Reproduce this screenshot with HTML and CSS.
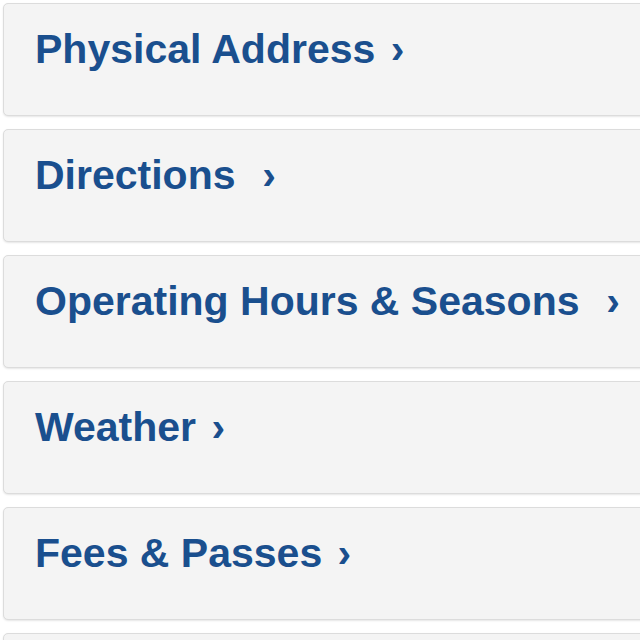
FILE: index.html
```html
<!DOCTYPE html>
<html>
<head>
<meta charset="utf-8">
<link rel="stylesheet" href="styles.css">
</head>
<body>
<div class="list">
  <div class="card"><a class="link">Physical Address <span class="chev">›</span></a></div>
  <div class="card"><a class="link">Directions &nbsp;<span class="chev">›</span></a></div>
  <div class="card"><a class="link">Operating Hours &amp; Seasons &nbsp;<span class="chev">›</span></a></div>
  <div class="card"><a class="link">Weather <span class="chev">›</span></a></div>
  <div class="card"><a class="link">Fees &amp; Passes <span class="chev">›</span></a></div>
  <div class="card"></div>
</div>
</body>
</html>
```
FILE: styles.css
```css
html, body {
  margin: 0;
  padding: 0;
  background: #ffffff;
  overflow: hidden;
}
.list {
  padding: 3px 0 0 3px;
  width: 720px;
  display: flex;
  flex-direction: column;
  gap: 13px;
}
.card {
  background: #f4f4f4;
  border: 1px solid #dcdcdc;
  border-radius: 5px;
  box-shadow: 0 1px 2px rgba(0,0,0,0.10);
  padding: 22px 0 42px 31px;
  height: 47px;
}
.link {
  font-family: "Liberation Sans", Arial, sans-serif;
  font-weight: bold;
  font-size: 41px;
  line-height: 47px;
  color: #1a4f8e;
  text-decoration: none;
  white-space: nowrap;
}
.chev {
  margin-left: 4px;
}
```
